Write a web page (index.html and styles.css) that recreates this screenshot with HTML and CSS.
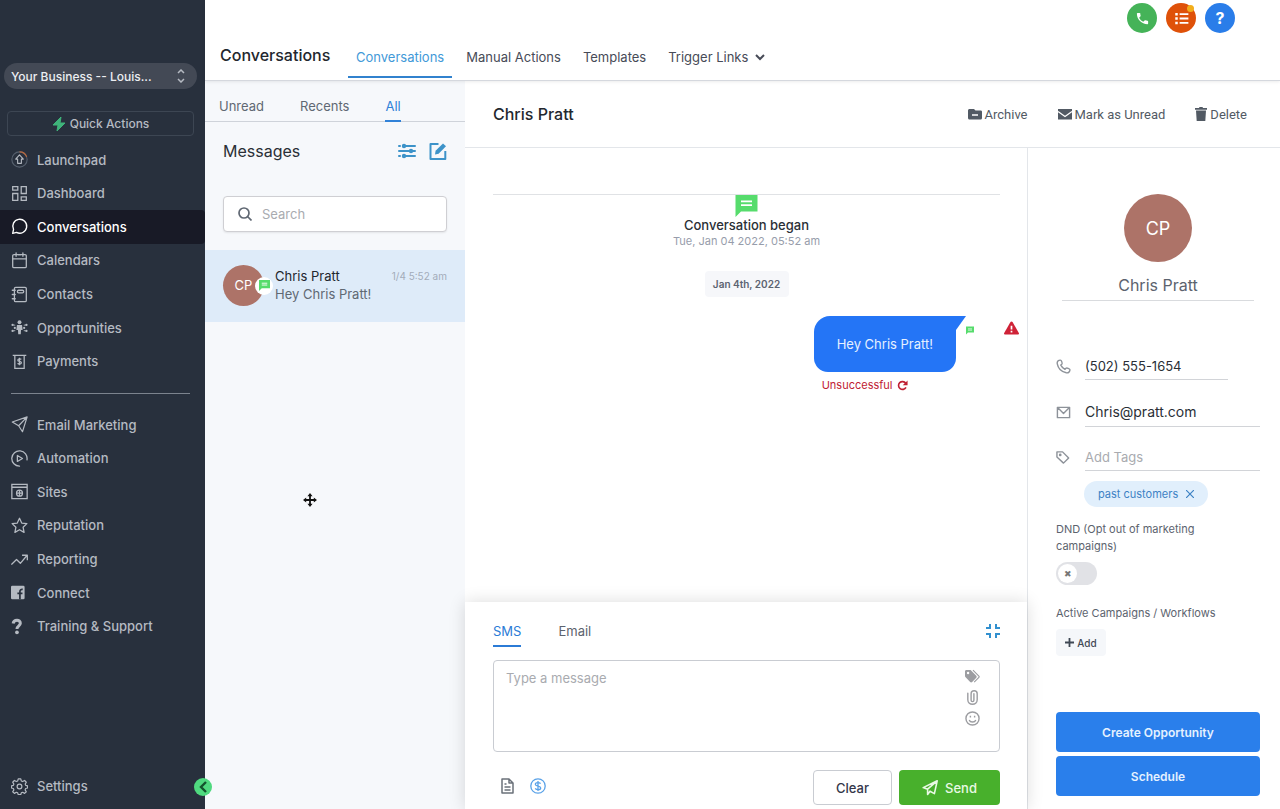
FILE: index.html
```html
<!DOCTYPE html>
<html lang="en">
<head>
    <meta charset="UTF-8">
    <meta name="viewport" content="width=device-width, initial-scale=1.0">
    <title>Conversations</title>
    <link rel="stylesheet" href="styles.css">
</head>
<body>
    <svg class="sprite" aria-hidden="true">
        <symbol id="sms" viewBox="0 0 24 24">
            <path fill="#56dc6c" d="M0 0h24v18H6l-6 6z"/>
            <path stroke="#fff" stroke-width="2" d="M6 7h12M6 11h12"/>
        </symbol>
    </svg>

    <aside class="sidebar">
        <div class="account">
            <select aria-label="Business account">
                <option>Your Business -- Louis...</option>
            </select>
            <svg class="account-arrows" viewBox="0 0 8 14" fill="none" stroke="currentColor" stroke-width="1.5"><path d="M1 4l3-3 3 3M1 10l3 3 3-3"/></svg>
        </div>
        <button class="quick-actions">
            <svg viewBox="0 0 14 16"><path fill="#3fb37a" stroke="#3fb37a" stroke-linejoin="round" d="M9 1L1 9h5l-1 6 8-8H8z"/></svg>
            Quick Actions
        </button>
        <nav class="menu">
            <a href="#"><svg viewBox="0 0 20 20" fill="none" stroke="currentColor" stroke-width="1.3"><circle cx="10" cy="10" r="9" stroke="#56606e"/><path stroke="#b5683f" d="M10 1a9 9 0 0 1 8.500 6"/><path d="M10 4.500l4.500 5h-2.300v5H7.800v-5H5.500z" stroke-linejoin="round"/></svg>Launchpad</a>
            <a href="#"><svg viewBox="0 0 20 20" fill="none" stroke="currentColor" stroke-width="1.5"><path d="M2 2h6v4H2zM12 2h6v8h-6zM2 10h6v8H2zM12 14h6v4h-6z"/></svg>Dashboard</a>
            <a href="#" class="active"><svg viewBox="0 0 20 20" fill="none" stroke="currentColor" stroke-width="1.6" stroke-linejoin="round"><path d="M2 18l1-4.500A8.200 8.200 0 1 1 6.500 17z"/></svg>Conversations</a>
            <a href="#"><svg viewBox="0 0 20 20" fill="none" stroke="currentColor" stroke-width="1.5" stroke-linecap="round"><rect x="2" y="3" width="16" height="15.500" rx="1.500"/><path d="M2 8h16M6 1v4M14 1v4M8.500 3h3"/></svg>Calendars</a>
            <a href="#"><svg viewBox="0 0 20 20" fill="none" stroke="currentColor" stroke-width="1.5" stroke-linecap="round"><rect x="4" y="1.500" width="14" height="17" rx="1.500"/><rect x="7.500" y="5" width="7.500" height="3" rx="1.500"/><path d="M1.500 5H5M1.500 10H5M1.500 15H5"/></svg>Contacts</a>
            <a href="#"><svg viewBox="0 0 20 20" fill="currentColor"><circle cx="10" cy="3.800" r="2.300"/><path d="M7 7h6l.7 6h-1.900l-.3 5h-3l-.3-5H6.300z"/><circle cx="1.800" cy="7" r="1.300"/><circle cx="1.800" cy="14" r="1.300"/><circle cx="4.500" cy="10.500" r="1.300"/><circle cx="18.200" cy="7" r="1.300"/><circle cx="18.200" cy="14" r="1.300"/><circle cx="15.500" cy="10.500" r="1.300"/><path fill="none" stroke="currentColor" d="M2 7l3 .3M2 14l3-.3M18 7l-3 .3M18 14l-3-.3"/></svg>Opportunities</a>
            <a href="#"><svg viewBox="0 0 20 20" fill="none" stroke="currentColor" stroke-width="1.5"><path d="M2 2.800h16M4.500 3v15h11V3"/><path d="M12.200 7.500c-1-1.100-4.200-.9-4.200.9 0 2 4.200 1 4.200 3 0 1.900-3.300 2-4.400.7M10 5.500v8.800"/></svg>Payments</a>
        </nav>
        <hr>
        <nav class="menu">
            <a href="#"><svg viewBox="0 0 20 20" fill="none" stroke="currentColor" stroke-width="1.4" stroke-linejoin="round"><path d="M1.500 7L19 1l-5.500 17.500-4.500-7zM9 11.500L19 1"/></svg>Email Marketing</a>
            <a href="#"><svg viewBox="0 0 20 20" fill="none" stroke="currentColor" stroke-width="1.5" stroke-linecap="round" stroke-linejoin="round"><path d="M10 19A9 9 0 1 1 18.800 11.500M7.500 6.500v7l6-3.500z"/></svg>Automation</a>
            <a href="#"><svg viewBox="0 0 20 20" fill="none" stroke="currentColor" stroke-width="1.5"><path d="M1 1.500h18v17H1zM1 5h18"/><circle cx="10" cy="12" r="3.500"/><path d="M6.500 12h7M10 8.500v7"/></svg>Sites</a>
            <a href="#"><svg viewBox="0 0 20 20" fill="none" stroke="currentColor" stroke-width="1.5" stroke-linejoin="round"><path d="M10 1.500l2.600 5.600 6.100.7-4.500 4.200 1.200 6.100L10 15l-5.400 3.100L5.800 12 1.300 7.800l6.100-.7z"/></svg>Reputation</a>
            <a href="#"><svg viewBox="0 0 20 20" fill="none" stroke="currentColor" stroke-width="1.5" stroke-linejoin="round"><path d="M.5 16l6-6 4.500 4.500L19 5M13 5h6.200v6"/></svg>Reporting</a>
            <a href="#"><svg viewBox="0 0 20 20"><rect y="2" width="16" height="16" rx="1.500" fill="currentColor"/><path fill="none" stroke="#28303d" stroke-width="2" d="M10.500 18v-9c0-2 1-2.800 3.300-2.600M7.500 11h6"/></svg>Connect</a>
            <a href="#"><svg viewBox="0 0 20 20"><path fill="none" stroke="currentColor" stroke-width="3.500" d="M2.500 6.500C3.300 1.500 11 1.500 11 6.200c0 3-4 3-4 6.800"/><circle cx="7" cy="16.800" r="2.200" fill="currentColor"/></svg>Training &amp; Support</a>
        </nav>
        <a href="#" class="settings"><svg viewBox="0 0 20 20" fill="none" stroke="currentColor" stroke-width="1.4" stroke-linejoin="round"><circle cx="10" cy="10" r="2.800"/><path d="M8.500 1h3l.6 2.500 1.600.7L16 2.900 18 5l-1.300 2.200.6 1.500 2.200.5v2.600l-2.300.6-.6 1.600L18 16.200l-2 1.900-2.300-1.300-1.600.7-.6 2h-3l-.6-2-1.600-.7L4 18.100l-2-1.900 1.400-2.200-.6-1.600L.5 11.800V9.200l2.300-.5.6-1.500L2 5l2-2.100 2.300 1.300 1.600-.7z"/></svg>Settings</a>
        <button class="collapse" aria-label="Collapse menu">
            <svg viewBox="0 0 10 12" fill="none" stroke="#14532d" stroke-width="2.4"><path d="M8 1L3 6l5 5"/></svg>
        </button>
    </aside>

    <div class="page">
        <header class="topbar">
            <div class="round-buttons">
                <button class="round green" aria-label="Call"><svg viewBox="0 0 24 24" fill="#fff"><path d="M6.620 10.790c1.440 2.830 3.760 5.140 6.590 6.590l2.200-2.200c.27-.27.67-.36 1.020-.24 1.120.37 2.330.57 3.570.57.55 0 1 .45 1 1V20c0 .55-.45 1-1 1C10.610 21 3 13.390 3 4c0-.55.45-1 1-1h3.500c.55 0 1 .45 1 1 0 1.250.2 2.450.57 3.570.11.35.03.74-.25 1.020z"/></svg></button>
                <button class="round orange" aria-label="Tasks"><svg viewBox="0 0 24 24" fill="none" stroke="#fff" stroke-width="3"><path d="M9 5h14M9 12h14M9 19h14"/><path stroke-width="4" d="M2 5h4M2 12h4M2 19h4"/></svg></button>
                <button class="round blue">?</button>
            </div>
            <div class="topnav">
                <h1>Conversations</h1>
                <nav>
                    <a href="#" class="active">Conversations</a>
                    <a href="#">Manual Actions</a>
                    <a href="#">Templates</a>
                    <a href="#">Trigger Links <svg viewBox="0 0 10 8" fill="none" stroke="currentColor" stroke-width="2"><path d="M1 2l4 4 4-4"/></svg></a>
                </nav>
            </div>
        </header>

        <section class="inbox">
            <nav class="filters">
                <a href="#">Unread</a>
                <a href="#">Recents</a>
                <a href="#" class="active">All</a>
            </nav>
            <div class="inbox-head">
                <h2>Messages</h2>
                <button aria-label="Filter"><svg viewBox="0 0 18 18" fill="none" stroke="currentColor" stroke-width="2" stroke-linecap="round"><path d="M1 4h1M5 4h12M1 9h10M15 9h2M1 14h1M6 14h11"/><g fill="currentColor" stroke="none"><circle cx="6" cy="4" r="2.200"/><circle cx="13" cy="9" r="2.200"/><circle cx="6" cy="14" r="2.200"/></g></svg></button>
                <button aria-label="New message"><svg viewBox="0 0 18 18" fill="none" stroke="currentColor" stroke-width="2" stroke-linejoin="round"><path d="M9.500 2H1.500v15h14.800V9"/><path fill="currentColor" stroke="none" d="M6 12.500l.6-3.700L14 1.500 17 4.300l-7.400 7.500z"/></svg></button>
            </div>
            <div class="search">
                <svg viewBox="0 0 14 14" fill="none" stroke="currentColor" stroke-width="1.7"><circle cx="6" cy="6" r="5"/><path d="M9.500 9.500l4 4"/></svg>
                <input type="text" placeholder="Search" aria-label="Search">
            </div>
            <a href="#" class="thread">
                <span class="avatar">CP<span class="badge"><svg><use href="#sms"/></svg></span></span>
                <span class="thread-text">
                    <strong>Chris Pratt</strong>
                    <span>Hey Chris Pratt!</span>
                </span>
                <time>1/4 5:52 am</time>
            </a>
        </section>

        <main class="detail">
            <div class="detail-head">
                <h2>Chris Pratt</h2>
                <button><svg viewBox="0 0 14 14"><path fill="currentColor" d="M1.500 2H6l1.500 1.500h5c.8 0 1.500.5 1.500 1.300V11c0 .8-.5 1.500-1.300 1.500H1.500C.7 12.500 0 11.900 0 11V3.500C0 2.600.7 2 1.500 2z"/><path stroke="#fff" stroke-width="1.500" d="M4 8h6"/></svg>Archive</button>
                <button><svg viewBox="0 0 14 14"><path fill="currentColor" d="M0 2h14v10.500H0z"/><path fill="none" stroke="#fff" stroke-width="1.3" d="M0 4.500l7 5 7-5"/></svg>Mark as Unread</button>
                <button><svg class="trash" viewBox="0 0 12 14" fill="currentColor"><path d="M0 1h4l.5-1h3L8 1h4v1.800H0zM1 3.500h10L10.300 14H1.700z"/></svg>Delete</button>
            </div>

            <section class="chat">
                <div class="history">
                    <div class="began">
                        <svg><use href="#sms"/></svg>
                        <strong>Conversation began</strong>
                        <span>Tue, Jan 04 2022, 05:52 am</span>
                    </div>
                    <div class="day">Jan 4th, 2022</div>
                    <div class="message">
                        <div>
                            <p class="bubble">Hey Chris Pratt!</p>
                            <p class="failed">Unsuccessful <svg viewBox="0 0 12 12" fill="none" stroke="currentColor" stroke-width="1.8"><path d="M9.800 8A4.300 4.300 0 1 1 9.500 3.500"/><path fill="currentColor" stroke="none" d="M11.500.5v5.200H6.300z"/></svg></p>
                        </div>
                        <svg class="via"><use href="#sms"/></svg>
                        <svg class="warn" viewBox="0 0 16 14"><path fill="#cf2237" d="M8 0c.5 0 .9.300 1.100.6l6.700 11.600c.5.900-.1 1.800-1.100 1.800H1.300c-1 0-1.600-.9-1.100-1.800L6.900.6C7.100.300 7.500 0 8 0z"/><path stroke="#fff" stroke-width="1.8" d="M8 4.500v4.200M8 10v1.800"/></svg>
                    </div>
                </div>

                <form class="composer">
                    <div class="composer-tabs">
                        <button type="button" class="active">SMS</button>
                        <button type="button">Email</button>
                        <button type="button" class="shrink" aria-label="Shrink"><svg viewBox="0 0 14 14" fill="none" stroke="currentColor" stroke-width="2"><path d="M0 4h4V0M10 0v4h4M0 10h4v4M14 10h-4v4"/></svg></button>
                    </div>
                    <div class="message-box">
                        <textarea placeholder="Type a message" aria-label="Message"></textarea>
                        <div class="tools">
                            <svg viewBox="0 0 16 14"><path fill="currentColor" d="M0 1.500C0 .7.700 0 1.500 0H6l6 6.200c.6.600.6 1.500 0 2.100l-4.400 4.600c-.6.600-1.500.6-2.100 0L.4 7.500A1.500 1.500 0 0 1 0 6.500zM3.300 2a1.300 1.300 0 1 0 0 2.600 1.300 1.300 0 0 0 0-2.600z"/><path fill="none" stroke="currentColor" stroke-width="1.2" d="M8.500.3l6.300 6.300c.4.400.4.900 0 1.300l-5 5.200"/></svg>
                            <svg viewBox="0 0 16 16" fill="none" stroke="currentColor" stroke-width="1.5" stroke-linecap="round"><path d="M9.500 4v7c0 1.800-3 1.800-3 0V4c0-4.300 6.500-4.300 6.500 0v6.500c0 6.300-10 6.300-10 0V3.500"/></svg>
                            <svg viewBox="0 0 16 16" fill="none" stroke="currentColor" stroke-width="1.5"><circle cx="8" cy="8" r="7"/><path d="M4.500 9.500c1 3 6 3 7 0"/><path d="M5 6h1.500M9.500 6H11" stroke-width="1.8"/></svg>
                        </div>
                    </div>
                    <div class="composer-foot">
                        <button type="button" class="plain" aria-label="Templates"><svg viewBox="0 0 16 16" fill="none" stroke="currentColor" stroke-width="1.5" stroke-linejoin="round"><path d="M2 1h7l4 4v10H2zM9 1v4h4M4.500 6h2M4.500 9h6M4.500 12h6"/></svg></button>
                        <button type="button" class="plain money" aria-label="Request payment"><svg viewBox="0 0 16 16" fill="none" stroke="currentColor" stroke-width="1.3"><circle cx="8" cy="8" r="7.200"/><path d="M10.600 5.700C9.500 4 5.300 4.200 5.300 6.300c0 2.400 5.400 1.200 5.400 3.600 0 2.200-4.300 2.300-5.500.4M8 3v10"/></svg></button>
                        <button type="button" class="clear">Clear</button>
                        <button type="button" class="send"><svg viewBox="0 0 20 20" fill="none" stroke="currentColor" stroke-width="2" stroke-linejoin="round"><path d="M1.500 9.500L19 1l-3.500 16-5.500-3-3 4v-6.500zM7 11.500L19 1"/></svg>Send</button>
                    </div>
                </form>
            </section>

            <aside class="contact">
                <div class="avatar large">CP</div>
                <input class="name" type="text" value="Chris Pratt" aria-label="Name">
                <div class="field phone">
                    <svg viewBox="0 0 16 16" fill="none" stroke="currentColor" stroke-width="1.5" stroke-linejoin="round"><path d="M4.600 1.200C2.500 1.200.9 2.700 1.300 5c.9 5 4.700 8.700 9.700 9.700 2.300.4 3.900-1.200 3.900-3.200 0-1.300-3.500-2.400-4.300-1.600l-1 1.100C7.800 10 6 8.300 5.100 6.500l1.100-1C7 4.700 6 1.200 4.600 1.200z"/></svg>
                    <input type="text" value="(502) 555-1654" aria-label="Phone">
                </div>
                <div class="field email">
                    <svg viewBox="0 0 16 16" fill="none" stroke="currentColor" stroke-width="1.5" stroke-linejoin="round"><path d="M1.500 2.500h13v11h-13zM2 3l6 6 6-6"/></svg>
                    <input type="text" value="Chris@pratt.com" aria-label="Email">
                </div>
                <div class="field tags">
                    <svg viewBox="0 0 16 16" fill="none" stroke="currentColor" stroke-width="1.5" stroke-linejoin="round"><path d="M1 2h6l6.500 6.500L8 14 1 7.500z"/><circle cx="4.500" cy="5.300" r=".7"/></svg>
                    <input type="text" placeholder="Add Tags" aria-label="Add Tags">
                </div>
                <button class="tag">past customers <svg viewBox="0 0 8 8" stroke="currentColor" stroke-width="1.2"><path d="M0 0l8 8M8 0L0 8"/></svg></button>
                <label class="dnd" for="dnd">DND (Opt out of marketing campaigns)</label>
                <input class="switch" type="checkbox" id="dnd">
                <p class="campaigns">Active Campaigns / Workflows</p>
                <button class="add"><svg viewBox="0 0 10 10" stroke="currentColor" stroke-width="2"><path d="M0 5h10M5 0v10"/></svg>Add</button>
                <div class="actions">
                    <button>Create Opportunity</button>
                    <button>Schedule</button>
                </div>
            </aside>
        </main>
    </div>

    <svg class="pointer" viewBox="0 0 14 14"><path fill="#111" stroke="#fff" stroke-width=".8" paint-order="stroke" d="M7 0l2.600 3.200H7.900v2.900h2.900V4.400L14 7l-3.200 2.600V7.900H7.900v2.900h1.700L7 14l-2.600-3.200h1.700V7.900H3.200v1.700L0 7l3.200-2.600v1.700h2.900V3.200H4.400z"/></svg>
</body>
</html>
```

FILE: styles.css
```css
* {
    box-sizing: border-box;
}
body {
    font-family: Inter, "Liberation Sans", sans-serif;
    font-size: 13px;
    margin: 0;
    min-height: 100vh;
    display: grid;
    grid-template-columns: 205px 1fr;
    color: #2a2f36;
    background: #fff;
}
h1, h2, p {
    margin: 0;
    font-weight: 500;
}
a {
    color: inherit;
    text-decoration: none;
}
button, input, textarea, select {
    font: inherit;
    color: inherit;
    margin: 0;
    padding: 0;
    border: none;
    background: none;
}
button {
    cursor: pointer;
}
svg {
    display: block;
    flex: none;
}
.sprite {
    position: absolute;
    width: 0;
    height: 0;
}

/* Sidebar */
.sidebar {
    position: relative;
    display: flex;
    flex-direction: column;
    padding-top: 63px;
    background: #28303d;
    color: #b5bac2;
    font-weight: 500;
}
.account {
    position: relative;
    margin: 0 8px 0 4px;
}
.account select {
    appearance: none;
    display: block;
    width: 100%;
    height: 26px;
    padding: 0 24px 0 7px;
    border-radius: 13px;
    background: #434955;
    color: #eceef1;
    font-size: 12px;
}
.account-arrows {
    position: absolute;
    right: 12px;
    top: 6px;
    width: 8px;
    height: 14px;
}
.quick-actions {
    display: flex;
    align-items: center;
    justify-content: center;
    gap: 4px;
    height: 25px;
    margin: 22px 11px 7px 7px;
    border: 1px solid #3d4653;
    border-radius: 4px;
    font-size: 12px;
}
.quick-actions svg {
    width: 14px;
    height: 16px;
}
/* seven rows share each block evenly */
.menu {
    display: grid;
    grid-auto-rows: 1fr;
    height: 235px;
}
.menu a, .settings {
    display: flex;
    align-items: center;
    gap: 9px;
    padding-left: 11px;
}
.menu svg, .settings svg {
    width: 17px;
    height: 17px;
}
.menu .active {
    background: #181a26;
    border-radius: 0 4px 4px 0;
    color: #fff;
}
.sidebar hr {
    width: 179px;
    height: 1px;
    margin: 15px 15px 14px 11px;
    border: none;
    background: #7c838e;
}
.settings {
    height: 34px;
    margin: auto 0 6px;
}
.collapse {
    position: absolute;
    right: -7px;
    bottom: 13px;
    display: flex;
    align-items: center;
    justify-content: center;
    width: 18px;
    height: 18px;
    border-radius: 50%;
    background: #4fd97f;
}
.collapse svg {
    width: 10px;
    height: 12px;
}

/* Top bar */
.page {
    display: grid;
    grid-template-columns: 260px 1fr;
    grid-template-rows: 81px 1fr;
    min-width: 0;
}
.topbar {
    position: relative;
    grid-column: 1 / -1;
    border-bottom: 1px solid #d5d8de;
    box-shadow: 0 1px 3px rgba(0, 0, 0, 0.08);
}
.round-buttons {
    display: flex;
    justify-content: flex-end;
    gap: 9px;
    padding: 3px 45px 0 0;
}
.round {
    position: relative;
    display: flex;
    align-items: center;
    justify-content: center;
    width: 30px;
    height: 30px;
    border-radius: 50%;
    color: #fff;
    font-size: 16px;
    font-weight: 700;
}
.round svg {
    width: 15px;
    height: 15px;
}
.green {
    background: #45b358;
}
.orange {
    background: #df5109;
}
.orange::after {
    content: "";
    position: absolute;
    top: 2px;
    right: 2px;
    width: 7px;
    height: 7px;
    border-radius: 50%;
    background: #f2ae1c;
}
.blue {
    background: #2a7de9;
}
.topnav {
    display: flex;
    height: 45px;
    padding-left: 15px;
}
.topnav h1 {
    width: 128px;
    font-size: 16px;
    line-height: 44px;
    color: #23272e;
}
.topnav nav {
    display: flex;
    gap: 6px;
}
.topnav a {
    display: flex;
    align-items: center;
    gap: 7px;
    padding: 4px 8px 0;
    border-bottom: 2px solid transparent;
    color: #474b57;
}
.topnav a svg {
    width: 10px;
    height: 8px;
}
.topnav .active {
    border-color: #3182ce;
    color: #4299d8;
}

/* Inbox */
.inbox {
    background: #f6f8fb;
    color: #606873;
}
.filters {
    display: flex;
    gap: 36px;
    height: 41px;
    padding-left: 14px;
    border-bottom: 1px solid #cfd3da;
}
.filters a {
    height: 41px;
    padding-top: 17px;
    line-height: 16px;
}
.filters .active {
    border-bottom: 2px solid #3182d8;
    color: #3182d8;
}
.inbox-head {
    display: flex;
    align-items: center;
    gap: 13px;
    padding: 18px 18px 0;
}
.inbox-head h2 {
    flex: 1;
    font-size: 16px;
    line-height: 22px;
    font-weight: 400;
    color: #2a2f36;
}
.inbox-head button {
    color: #3d93c9;
}
.inbox-head svg {
    width: 18px;
    height: 18px;
}
.search {
    display: flex;
    align-items: center;
    gap: 10px;
    height: 36px;
    margin: 34px 18px 18px;
    padding-left: 14px;
    border: 1px solid #cfcfd3;
    border-radius: 4px;
    background: #fff;
    box-shadow: 0 1px 2px rgba(0, 0, 0, 0.08);
}
.search svg {
    width: 14px;
    height: 14px;
}
.search input {
    flex: 1;
    min-width: 0;
}
::placeholder {
    color: #a9abb0;
    opacity: 1;
}
.thread {
    display: flex;
    align-items: center;
    height: 72px;
    padding: 0 18px 2px;
    background: #deebf9;
}
.avatar {
    position: relative;
    display: flex;
    align-items: center;
    justify-content: center;
    width: 41px;
    height: 41px;
    border-radius: 50%;
    background: #ad7368;
    color: #fff;
}
.badge {
    position: absolute;
    right: -9px;
    top: 12px;
    display: flex;
    align-items: center;
    justify-content: center;
    width: 18px;
    height: 18px;
    border-radius: 50%;
    background: #fff;
}
.badge svg {
    width: 11px;
    height: 11px;
}
.thread-text {
    flex: 1;
    padding-left: 11px;
    line-height: 18px;
}
.thread-text strong, .thread-text span {
    display: block;
    font-weight: 400;
}
.thread-text strong {
    color: #22262e;
}
.thread time {
    align-self: flex-start;
    margin-top: 18px;
    font-size: 10px;
    line-height: 16px;
    color: #a3acb9;
}

/* Conversation */
.detail {
    display: grid;
    grid-template-columns: 1fr 252px;
    grid-template-rows: 67px 1fr;
    min-width: 0;
}
.detail-head {
    grid-column: 1 / -1;
    display: flex;
    align-items: center;
    gap: 30px;
    padding: 0 33px 0 28px;
    border-bottom: 1px solid #e3e6ea;
}
.detail-head h2 {
    flex: 1;
    font-size: 16px;
    color: #23272e;
}
.detail-head button {
    display: flex;
    align-items: center;
    gap: 3px;
    font-family: Roboto, sans-serif;
    color: #525a64;
}
.detail-head svg {
    width: 14px;
    height: 14px;
}
.detail-head .trash {
    width: 12px;
}
.chat {
    display: flex;
    flex-direction: column;
    min-width: 0;
    border-right: 1px solid #e3e6ea;
}
.history {
    flex: 1;
    padding: 46px 27px 20px 28px;
}
.began {
    display: flex;
    flex-direction: column;
    align-items: center;
    border-top: 1px solid #e0e2e5;
    line-height: 16px;
}
.began svg {
    width: 23px;
    height: 22px;
}
.began strong {
    font-weight: 500;
}
.began span {
    font-size: 11px;
    color: #979dab;
}
.day {
    width: 84px;
    margin: 22px auto 19px;
    border-radius: 4px;
    background: #f6f7fa;
    color: #5c6370;
    font-size: 10px;
    font-weight: 600;
    line-height: 26px;
    text-align: center;
}
.message {
    display: flex;
    justify-content: flex-end;
    margin-right: -19px;
}
.bubble {
    position: relative;
    padding: 20px 23px;
    border-radius: 16px 0 14px 14px;
    background: #2475f6;
    color: #e6f0ff;
    font-weight: 400;
    line-height: 16px;
}
.bubble::after {
    content: "";
    position: absolute;
    left: 100%;
    top: 0;
    width: 10px;
    height: 14px;
    background: inherit;
    clip-path: polygon(0 0, 100% 0, 0 100%);
}
.failed {
    display: flex;
    align-items: center;
    gap: 4px;
    padding: 5px 8px;
    font-size: 11px;
    line-height: 16px;
    font-weight: 400;
    color: #c02033;
}
.failed svg {
    width: 11px;
    height: 11px;
}
.via {
    width: 8px;
    height: 9px;
    margin: 10px 30px 0 10px;
}
.warn {
    width: 15px;
    height: 14px;
    margin-top: 5px;
}

/* Composer */
.composer {
    position: relative;
    padding: 19px 27px 4px 28px;
    background: #fff;
    box-shadow: 0 0 16px rgba(0, 0, 0, 0.14);
    clip-path: inset(-20px -30px 0 -20px);
}
.composer-tabs {
    display: flex;
    gap: 37px;
    height: 26px;
    color: #5c636e;
}
.composer-tabs button {
    padding-bottom: 4px;
    border-bottom: 2px solid transparent;
}
.composer-tabs .active {
    border-color: #2b7bd6;
    color: #2b7bd6;
}
.composer-tabs .shrink {
    margin-left: auto;
    color: #3290cf;
}
.shrink svg {
    width: 14px;
    height: 14px;
}
.message-box {
    display: flex;
    height: 92px;
    margin-top: 13px;
    border: 1px solid #c9ccd2;
    border-radius: 4px;
}
.message-box textarea {
    flex: 1;
    padding: 8px 12px;
    resize: none;
    outline: none;
    line-height: 18px;
}
.tools {
    display: flex;
    flex-direction: column;
    align-items: center;
    gap: 6px;
    padding: 8px 19px 0 0;
    color: #9c9da1;
}
.tools svg {
    width: 15px;
    height: 15px;
}
.composer-foot {
    display: flex;
    align-items: center;
    margin-top: 18px;
}
.plain {
    margin: 0 7px 3px;
    color: #6b717a;
}
.plain svg {
    width: 16px;
    height: 16px;
}
.money {
    color: #5aa2e8;
}
.clear, .send {
    height: 35px;
    border-radius: 4px;
    font-weight: 500;
}
.clear {
    width: 79px;
    margin: 0 7px 0 auto;
    border: 1px solid #c9ccd2;
    color: #33364a;
}
.send {
    display: flex;
    align-items: center;
    justify-content: center;
    gap: 7px;
    width: 101px;
    background: #48b02c;
    color: #e9f9e4;
}
.send svg {
    width: 16px;
    height: 16px;
}

/* Contact panel */
.contact {
    display: flex;
    flex-direction: column;
    align-items: flex-start;
    padding: 46px 20px 13px 28px;
    color: #5c636e;
}
.contact .large {
    align-self: center;
    width: 68px;
    height: 68px;
    font-size: 18px;
}
.contact .name {
    width: 192px;
    height: 28px;
    margin: 11px 0 51px;
    padding-bottom: 3px;
    align-self: center;
    border-bottom: 1px solid #d9dbde;
    font-size: 16px;
    text-align: center;
}
.field {
    display: flex;
    align-items: center;
    gap: 14px;
    width: 100%;
    color: #8d9299;
}
.field svg {
    width: 15px;
    height: 15px;
}
.field input {
    flex: 1;
    min-width: 0;
    height: 28px;
    border-bottom: 1px solid #d2d4d8;
    color: #2a2f36;
}
.phone {
    padding-right: 32px;
    margin-bottom: 18px;
}
.email {
    margin-bottom: 16px;
}
.email input {
    height: 29px;
    padding-bottom: 2px;
    font-size: 14px;
}
.tag {
    display: flex;
    align-items: center;
    gap: 8px;
    height: 26px;
    margin: 10px 0 14px 28px;
    padding: 0 14px;
    border-radius: 13px;
    background: #e1effc;
    color: #3d82c4;
    font-size: 11px;
}
.tag svg {
    width: 8px;
    height: 8px;
}
.dnd, .campaigns {
    font-size: 11px;
    font-weight: 400;
    line-height: 17px;
}
.dnd {
    padding-right: 50px;
}
.switch {
    appearance: none;
    position: relative;
    width: 41px;
    height: 23px;
    margin: 7px 0 20px;
    border-radius: 12px;
    background: #e1e2e6;
}
.switch::before {
    content: "✖";
    position: absolute;
    left: 2px;
    top: 2px;
    width: 19px;
    height: 19px;
    border-radius: 50%;
    background: #fff;
    color: #777;
    font-size: 9px;
    line-height: 19px;
    text-align: center;
}
.add {
    display: flex;
    align-items: center;
    justify-content: center;
    gap: 3px;
    width: 50px;
    height: 27px;
    margin-top: 7px;
    border-radius: 4px;
    background: #f5f7fa;
    color: #3f4854;
    font-size: 10px;
    font-weight: 500;
}
.add svg {
    width: 9px;
    height: 9px;
}
.actions {
    display: grid;
    gap: 4px;
    width: 100%;
    margin-top: auto;
}
.actions button {
    height: 40px;
    border-radius: 4px;
    background: #2a7feb;
    color: #e4f1ff;
    font-size: 12px;
    font-weight: 600;
}

.pointer {
    position: absolute;
    left: 303px;
    top: 493px;
    width: 14px;
    height: 14px;
}
```
